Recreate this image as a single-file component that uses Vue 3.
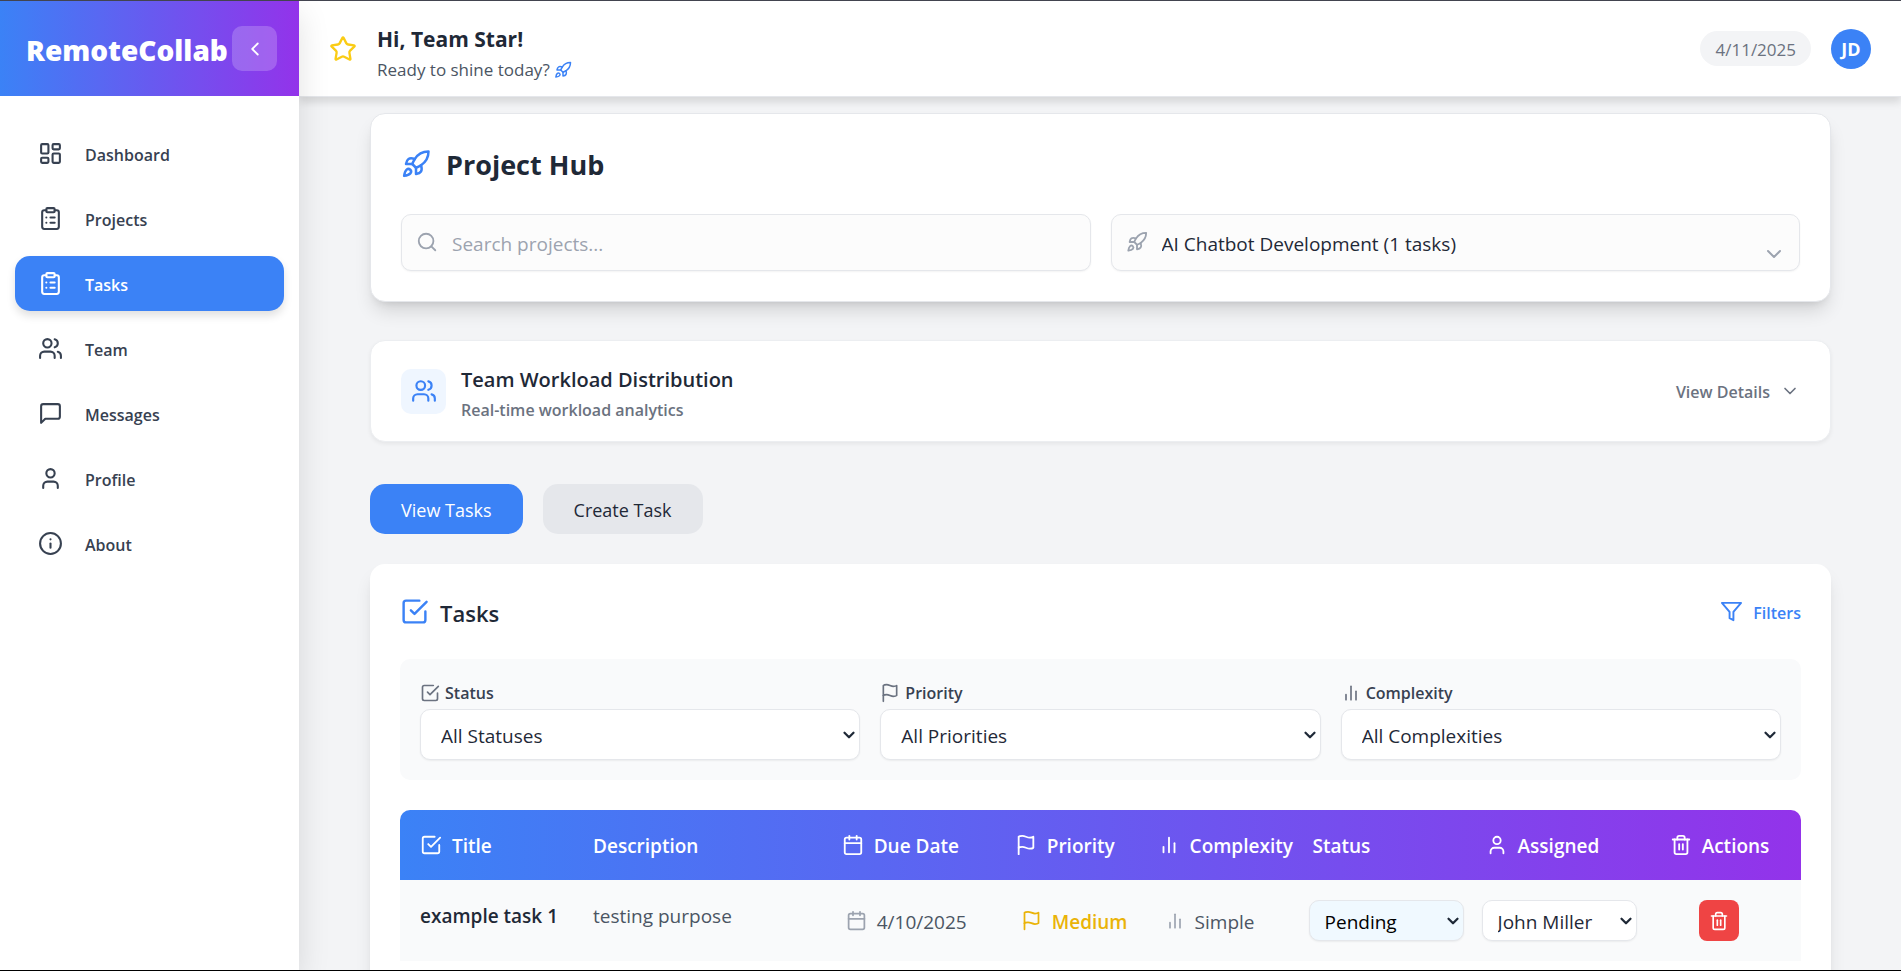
<script setup>
import { ref, h } from 'vue'

const shapes = {
  dashboard: ['M4 3h5a1 1 0 0 1 1 1v7a1 1 0 0 1-1 1H4a1 1 0 0 1-1-1V4a1 1 0 0 1 1-1z', 'M15 3h5a1 1 0 0 1 1 1v3a1 1 0 0 1-1 1h-5a1 1 0 0 1-1-1V4a1 1 0 0 1 1-1z', 'M15 12h5a1 1 0 0 1 1 1v7a1 1 0 0 1-1 1h-5a1 1 0 0 1-1-1v-7a1 1 0 0 1 1-1z', 'M4 16h5a1 1 0 0 1 1 1v3a1 1 0 0 1-1 1H4a1 1 0 0 1-1-1v-3a1 1 0 0 1 1-1z'],
  clipboard: ['M9 2h6a1 1 0 0 1 1 1v2a1 1 0 0 1-1 1H9a1 1 0 0 1-1-1V3a1 1 0 0 1 1-1z', 'M16 4h2a2 2 0 0 1 2 2v14a2 2 0 0 1-2 2H6a2 2 0 0 1-2-2V6a2 2 0 0 1 2-2h2', 'M12 11h4', 'M12 16h4', 'M8 11h.01', 'M8 16h.01'],
  users: ['M16 21v-2a4 4 0 0 0-4-4H6a4 4 0 0 0-4 4v2', 'M13 7a4 4 0 1 1-8 0 4 4 0 0 1 8 0z', 'M22 21v-2a4 4 0 0 0-3-3.87', 'M16 3.13a4 4 0 0 1 0 7.75'],
  message: ['M21 15a2 2 0 0 1-2 2H7l-4 4V5a2 2 0 0 1 2-2h14a2 2 0 0 1 2 2z'],
  user: ['M19 21v-2a4 4 0 0 0-4-4H9a4 4 0 0 0-4 4v2', 'M16 7a4 4 0 1 1-8 0 4 4 0 0 1 8 0z'],
  info: ['M22 12a10 10 0 1 1-20 0 10 10 0 0 1 20 0z', 'M12 16v-4', 'M12 8h.01'],
  left: ['m15 18-6-6 6-6'],
  down: ['m6 9 6 6 6-6'],
  star: ['M11.525 2.295a.53.53 0 0 1 .95 0l2.31 4.679a2.123 2.123 0 0 0 1.595 1.16l5.166.756a.53.53 0 0 1 .294.904l-3.736 3.638a2.123 2.123 0 0 0-.611 1.878l.882 5.14a.53.53 0 0 1-.771.56l-4.618-2.428a2.122 2.122 0 0 0-1.973 0L6.396 21.01a.53.53 0 0 1-.77-.56l.881-5.139a2.122 2.122 0 0 0-.611-1.879L2.16 9.795a.53.53 0 0 1 .294-.906l5.165-.755a2.122 2.122 0 0 0 1.597-1.16z'],
  rocket: ['M4.5 16.5c-1.5 1.26-2 5-2 5s3.74-.5 5-2c.71-.84.7-2.13-.09-2.91a2.18 2.18 0 0 0-2.91-.09z', 'm12 15-3-3a22 22 0 0 1 2-3.95A12.88 12.88 0 0 1 22 2c0 2.72-.78 7.5-6 11a22.35 22.35 0 0 1-4 2z', 'M9 12H4s.55-3.03 2-4c1.62-1.08 5 0 5 0', 'M12 15v5s3.03-.55 4-2c1.08-1.62 0-5 0-5'],
  search: ['M19 11a8 8 0 1 1-16 0 8 8 0 0 1 16 0z', 'm21 21-4.3-4.3'],
  check: ['m9 11 3 3L22 4', 'M21 12v7a2 2 0 0 1-2 2H5a2 2 0 0 1-2-2V5a2 2 0 0 1 2-2h11'],
  filter: ['M22 3H2l8 9.46V19l4 2v-8.54L22 3z'],
  flag: ['M4 15s1-1 4-1 5 2 8 2 4-1 4-1V3s-1 1-4 1-5-2-8-2-4 1-4 1z', 'M4 22v-7'],
  bars: ['M18 20V10', 'M12 20V4', 'M6 20v-6'],
  calendar: ['M8 2v4', 'M16 2v4', 'M5 4h14a2 2 0 0 1 2 2v14a2 2 0 0 1-2 2H5a2 2 0 0 1-2-2V6a2 2 0 0 1 2-2z', 'M3 10h18'],
  trash: ['M3 6h18', 'M19 6v14a2 2 0 0 1-2 2H7a2 2 0 0 1-2-2V6', 'M8 6V4a2 2 0 0 1 2-2h4a2 2 0 0 1 2 2v2', 'M10 11v6', 'M14 11v6'],
}

const Icon = ({ name, size = 22, stroke = 2 }) =>
  h('svg', { width: size, height: size, viewBox: '0 0 24 24', fill: 'none', stroke: 'currentColor', 'stroke-width': stroke, 'stroke-linecap': 'round', 'stroke-linejoin': 'round', 'aria-hidden': 'true', class: 'icon' },
    shapes[name].map((d) => h('path', { d })))
Icon.props = ['name', 'size', 'stroke']

const nav = [
  { label: 'Dashboard', icon: 'dashboard' },
  { label: 'Projects', icon: 'clipboard' },
  { label: 'Tasks', icon: 'clipboard' },
  { label: 'Team', icon: 'users' },
  { label: 'Messages', icon: 'message' },
  { label: 'Profile', icon: 'user' },
  { label: 'About', icon: 'info' },
]
const active = ref('Tasks')
const query = ref('')
const filters = [
  { id: 'status', label: 'Status', icon: 'check', options: ['All Statuses', 'Pending', 'In Progress', 'Completed'] },
  { id: 'priority', label: 'Priority', icon: 'flag', options: ['All Priorities', 'Low', 'Medium', 'High'] },
  { id: 'complexity', label: 'Complexity', icon: 'bars', options: ['All Complexities', 'Simple', 'Moderate', 'Complex'] },
]
const columns = [
  { key: 'title', label: 'Title', icon: 'check' },
  { key: 'description', label: 'Description' },
  { key: 'due', label: 'Due Date', icon: 'calendar' },
  { key: 'priority', label: 'Priority', icon: 'flag' },
  { key: 'complexity', label: 'Complexity', icon: 'bars' },
  { key: 'status', label: 'Status' },
  { key: 'assigned', label: 'Assigned', icon: 'user' },
  { key: 'actions', label: 'Actions', icon: 'trash' },
]
</script>

<template>
  <div class="app">
    <aside class="sidebar">
      <div class="brand">
        <span class="brand-name">RemoteCollab</span>
        <button class="collapse" type="button" aria-label="Collapse sidebar"><Icon name="left" :size="22" /></button>
      </div>
      <nav class="nav">
        <a v-for="item in nav" :key="item.label" href="#" class="nav-item" :class="{ active: item.label === active }" @click.prevent="active = item.label">
          <Icon :name="item.icon" :size="25" />
          <span class="text">{{ item.label }}</span>
        </a>
      </nav>
    </aside>

    <div class="main">
      <header class="topbar">
        <span class="star"><Icon name="star" :size="28" /></span>
        <div class="greeting">
          <h1>Hi, Team Star!</h1>
          <p>Ready to shine today? <span class="blue"><Icon name="rocket" :size="18" /></span></p>
        </div>
        <span class="date">4/11/2025</span>
        <span class="avatar">JD</span>
      </header>

      <main class="content">
        <section class="card hub">
          <h2><span class="blue"><Icon name="rocket" :size="30" /></span><span class="text">Project Hub</span></h2>
          <div class="hub-grid">
            <div class="field">
              <span class="field-icon"><Icon name="search" /></span>
              <input v-model="query" type="text" placeholder="Search projects..." aria-label="Search projects">
            </div>
            <div class="field">
              <span class="field-icon"><Icon name="rocket" /></span>
              <select aria-label="Project"><option>AI Chatbot Development (1 tasks)</option></select>
              <span class="field-arrow"><Icon name="down" :size="24" /></span>
            </div>
          </div>
        </section>

        <section class="card workload">
          <span class="badge"><Icon name="users" :size="26" /></span>
          <div class="workload-text">
            <h3>Team Workload Distribution</h3>
            <p>Real-time workload analytics</p>
          </div>
          <button class="details" type="button"><span class="text">View Details</span><Icon name="down" :size="20" /></button>
        </section>

        <div class="tabs">
          <button class="tab primary" type="button">View Tasks</button>
          <button class="tab" type="button">Create Task</button>
        </div>

        <section class="tasks">
          <div class="tasks-head">
            <h2><span class="blue"><Icon name="check" :size="29" /></span><span class="text">Tasks</span></h2>
            <button class="filter-toggle" type="button"><Icon name="filter" :size="23" /><span class="text">Filters</span></button>
          </div>

          <div class="filters">
            <div v-for="f in filters" :key="f.id" class="filter">
              <label :for="f.id"><Icon :name="f.icon" :size="20" />{{ f.label }}</label>
              <div class="pick">
                <select :id="f.id"><option v-for="o in f.options" :key="o">{{ o }}</option></select>
                <span class="arrow"><Icon name="down" :size="18" :stroke="3" /></span>
              </div>
            </div>
          </div>

          <table>
            <colgroup><col v-for="c in columns" :key="c.key" :class="'col-' + c.key"></colgroup>
            <thead>
              <tr>
                <th v-for="c in columns" :key="c.key" scope="col">
                  <span class="cell"><Icon v-if="c.icon" :name="c.icon" :size="22" /><span class="text">{{ c.label }}</span></span>
                </th>
              </tr>
            </thead>
            <tbody>
              <tr>
                <td class="title">example task 1</td>
                <td class="description">testing purpose</td>
                <td class="due"><span class="cell"><span class="muted"><Icon name="calendar" :size="21" /></span><span class="text">4/10/2025</span></span></td>
                <td class="priority"><span class="cell"><Icon name="flag" :size="21" /><span class="text">Medium</span></span></td>
                <td class="complexity"><span class="cell"><span class="muted"><Icon name="bars" :size="20" /></span><span class="text">Simple</span></span></td>
                <td class="status">
                  <div class="pick small pending">
                    <select aria-label="Task status"><option>Pending</option><option>In Progress</option><option>Completed</option></select>
                    <span class="arrow"><Icon name="down" :size="18" :stroke="3" /></span>
                  </div>
                </td>
                <td class="assigned">
                  <div class="pick small">
                    <select aria-label="Assignee"><option>John Miller</option></select>
                    <span class="arrow"><Icon name="down" :size="18" :stroke="3" /></span>
                  </div>
                </td>
                <td class="actions"><button class="delete" type="button" aria-label="Delete task"><Icon name="trash" :size="20" /></button></td>
              </tr>
            </tbody>
          </table>
        </section>
      </main>
    </div>
  </div>
</template>

<style>
body { margin: 0; background: #f3f4f6; }
.icon { display: block; flex-shrink: 0; }
</style>

<style scoped>
* { box-sizing: border-box; }
.app { display: flex; height: 100vh; overflow: hidden; border-top: 1px solid #42444f; border-bottom: 1px solid #000; background: #f3f4f6; color: #1f2937; font-family: "Open Sans", "Noto Sans", sans-serif; font-size: 19px; line-height: 30px; }
h1, h2, h3, p { margin: 0; }
button, input, select { font: inherit; color: inherit; border: 0; padding: 0; background: none; }
button { cursor: pointer; }
.blue { color: #3b82f6; }
.muted { color: #9ca3af; }
.text { padding-top: 2px; }

.sidebar { position: relative; z-index: 3; width: 299px; flex-shrink: 0; background: #fff; box-shadow: 0 12px 30px rgba(0, 0, 0, .12); }
.brand { display: flex; align-items: center; justify-content: space-between; height: 95px; padding: 0 22px 0 26px; background: linear-gradient(90deg, #3b82f6, #9333ea); color: #fff; }
.brand-name { padding-top: 2px; font-size: 28px; font-weight: 800; }
.collapse { display: grid; place-items: center; width: 45px; height: 45px; flex-shrink: 0; border-radius: 10px; background: rgba(255, 255, 255, .2); color: #fff; }
.nav { display: flex; flex-direction: column; gap: 10px; padding: 30px 15px; }
.nav-item { display: flex; align-items: center; gap: 22px; height: 55px; padding: 0 23px; border-radius: 15px; color: #374151; font-size: 16px; font-weight: 600; text-decoration: none; }
.nav-item.active { background: #3b82f6; color: #fff; box-shadow: 0 5px 8px rgba(0, 0, 0, .12); }

.main { display: flex; flex-direction: column; flex: 1; min-width: 0; }
.topbar { position: relative; z-index: 2; display: flex; align-items: center; flex-shrink: 0; height: 96px; padding: 0 30px; background: #fff; border-bottom: 1px solid #e5e7eb; box-shadow: 0 5px 8px rgba(0, 0, 0, .12); }
.star { color: #facc15; }
.greeting { flex: 1; padding: 11px 0 0 20px; }
.greeting h1 { font-size: 21px; line-height: 31px; font-weight: 700; }
.greeting p { display: flex; gap: 4px; align-items: center; color: #4b5563; font-size: 17px; }
.date { padding: 1px 15px 0; height: 35px; line-height: 35px; border-radius: 18px; background: #f3f4f6; color: #6b7280; font-size: 17px; }
.avatar { margin-left: 20px; width: 40px; height: 40px; line-height: 41px; border-radius: 50%; background: #3b82f6; color: #fff; font-size: 18px; font-weight: 700; text-align: center; }

.content { flex: 1; min-height: 0; overflow-y: auto; scrollbar-width: none; padding: 16px 70px 40px 71px; }
.card { background: #fff; border: 1px solid #e5e7eb; border-radius: 15px; }
.hub { padding: 30px; box-shadow: 0 12px 19px -4px rgba(0, 0, 0, .14), 0 5px 8px -5px rgba(0, 0, 0, .12); }
.hub h2 { display: flex; align-items: center; gap: 15px; height: 40px; margin-bottom: 30px; font-size: 27px; font-weight: 700; }
.hub-grid { display: grid; grid-template-columns: 1fr 1fr; gap: 20px; }
.field { position: relative; display: flex; }
.field input, .field select { appearance: none; width: 100%; height: 57px; padding: 2px 50px 0; border: 1px solid #e5e7eb; border-radius: 10px; background: #fcfcfc; box-shadow: 0 1px 2px rgba(0, 0, 0, .05); }
.field input::placeholder { color: #9ca3af; opacity: 1; }
.field-icon { position: absolute; left: 15px; top: 17px; color: #9ca3af; }
.field-arrow { position: absolute; right: 14px; top: 28px; color: #9ca3af; }

.workload { display: flex; align-items: center; height: 102px; margin-top: 38px; padding: 0 30px; box-shadow: 0 2px 4px rgba(0, 0, 0, .06); border-color: #eceef1; }
.badge { display: grid; place-items: center; width: 45px; height: 45px; border-radius: 10px; background: #eff6ff; color: #3b82f6; }
.workload-text { flex: 1; padding: 6px 0 0 15px; }
.workload-text h3 { font-size: 20px; line-height: 31px; font-weight: 600; }
.workload-text p { color: #6b7280; font-size: 16px; font-weight: 600; }
.details { display: flex; align-items: center; gap: 10px; color: #6b7280; font-size: 16px; font-weight: 600; }

.tabs { display: flex; gap: 20px; margin: 42px 0 30px; }
.tab { height: 50px; padding: 2px 31px 0; border-radius: 15px; background: #e5e7eb; font-size: 18px; }
.tab.primary { background: #3b82f6; color: #fff; }

.tasks { padding: 30px; border-radius: 15px; background: #fff; box-shadow: 0 12px 19px -4px rgba(0, 0, 0, .12), 0 5px 8px -5px rgba(0, 0, 0, .1); }
.tasks-head { display: flex; align-items: center; justify-content: space-between; height: 35px; margin-bottom: 30px; }
.tasks-head h2 { display: flex; align-items: center; gap: 11px; font-size: 22px; font-weight: 600; }
.filter-toggle { display: flex; align-items: center; gap: 10px; color: #3b82f6; font-size: 16px; font-weight: 600; }
.filters { display: grid; grid-template-columns: repeat(3, 1fr); gap: 20px; padding: 20px; border-radius: 10px; background: #f9fafb; }
.filter label { display: flex; align-items: center; gap: 5px; height: 30px; padding-bottom: 3px; color: #374151; font-size: 16px; font-weight: 600; }
.filter label svg { color: #6b7280; }
.pick { position: relative; }
.pick select { appearance: none; display: block; width: 100%; height: 51px; padding: 2px 20px 0; border: 1px solid #e5e7eb; border-radius: 10px; background: #fff; box-shadow: 0 1px 2px rgba(0, 0, 0, .06); }
.arrow { position: absolute; right: 2px; top: 17px; pointer-events: none; }
.field-icon, .field-arrow { pointer-events: none; }
.pick.small { width: 155px; }
.pick.small select { height: 41px; padding: 2px 15px 0; }
.pick.small .arrow { top: 12px; }
.pick.pending select { background: #f0f9ff; color: #000; }

table { width: 100%; margin-top: 30px; table-layout: fixed; border-collapse: separate; border-spacing: 0; overflow: hidden; border-radius: 10px 10px 0 0; }
.col-title { width: 12.35%; }
.col-description { width: 17.75%; }
.col-due { width: 12.35%; }
.col-priority { width: 10.2%; }
.col-complexity { width: 11.06%; }
.col-status { width: 12.35%; }
.col-assigned { width: 13.14%; }
thead { background: linear-gradient(90deg, #3b82f6, #9333ea); color: #fff; }
th { height: 70px; padding: 0 0 0 20px; text-align: left; font-weight: 600; white-space: nowrap; }
td { height: 81px; padding: 0 0 0 20px; background: #f9fafb; white-space: nowrap; }
.cell { display: flex; align-items: center; gap: 10px; }
.title, .description { padding-bottom: 10px; }
.title { font-weight: 600; }
.description, .due, .complexity { color: #4b5563; }
.due { padding-left: 24px; }
.priority { padding-left: 26px; color: #eab308; font-weight: 600; }
.complexity { padding-left: 27px; }
.status, .assigned { padding-left: 16px; }
.actions { padding: 0 12px 0 0; text-align: center; }
.delete { display: inline-grid; place-items: center; width: 40px; height: 41px; vertical-align: middle; border-radius: 8px; background: #ef4444; color: #fff; }
</style>
